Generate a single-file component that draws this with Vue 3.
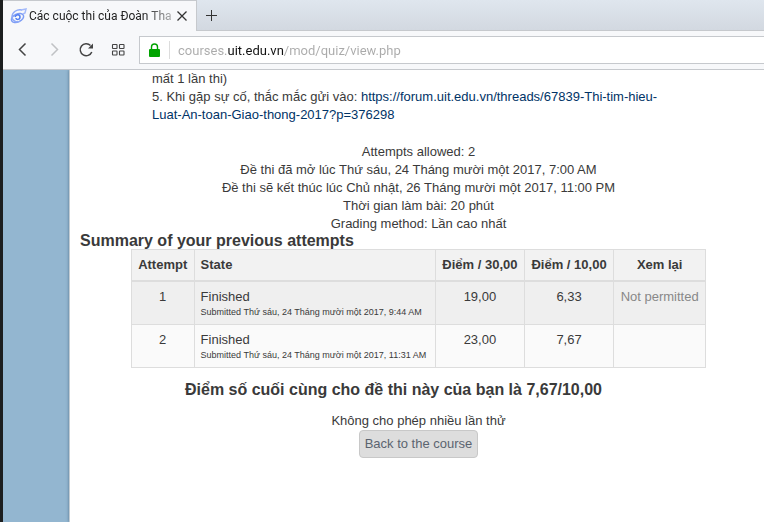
<template>
    <div class="window">
        <header class="browser">
            <div class="tab-bar">
                <div class="tab">
                    <svg class="favicon" width="17" height="16" viewBox="0 0 17 16" fill="none">
                        <ellipse cx="7.5" cy="10" rx="6.500" ry="4" stroke="#7c9cf5" stroke-width="1.5" transform="rotate(-25 7.5 10)" />
                        <path d="M12 2C7 1 2 4 2 9c0 4 5 6 8 4" stroke="#8fabf8" stroke-width="1.5" />
                        <path d="M5 9c1-3 5-3 5 0s-4 3-4 1" stroke="#4f7df2" stroke-width="1.5" />
                        <path d="M11 2l5-1-1 4-2 1" stroke="#a5bbfa" stroke-width="1.5" />
                    </svg>
                    <span class="tab-title">Các cuộc thi của Đoàn Tha</span>
                    <button class="icon-button close" aria-label="Close tab">
                        <svg width="10" height="10" viewBox="0 0 10 10" stroke="#333" stroke-width="1.3">
                            <path d="M.5.5l9 9M9.500.5l-9 9" />
                        </svg>
                    </button>
                </div>
                <button class="icon-button new-tab" aria-label="New tab">
                    <svg width="11" height="11" viewBox="0 0 11 11" stroke="#333" stroke-width="1">
                        <path d="M5.500 0v11M0 5.500h11" />
                    </svg>
                </button>
            </div>
            <div class="toolbar">
                <nav class="nav-buttons">
                    <button class="icon-button" aria-label="Back">
                        <svg width="16" height="16" viewBox="0 0 16 16" fill="none" stroke="#444" stroke-width="1.5">
                            <path d="M11.500 1.500L5.500 7.500l6 6" />
                        </svg>
                    </button>
                    <button class="icon-button" aria-label="Forward" disabled>
                        <svg width="16" height="16" viewBox="0 0 16 16" fill="none" stroke="#c0c2c5" stroke-width="1.5">
                            <path d="M5.500 1.500l6 6-6 6" />
                        </svg>
                    </button>
                    <button class="icon-button" aria-label="Reload">
                        <svg width="16" height="16" viewBox="0 0 16 16" fill="none" stroke="#444" stroke-width="1.5">
                            <path d="M13.800 10A6 6 0 1 1 12.500 3.500" />
                            <path d="M15 1.500v5h-5z" fill="#444" stroke="none" />
                        </svg>
                    </button>
                    <button class="icon-button" aria-label="Speed dial">
                        <svg width="16" height="16" viewBox="0 0 16 16" fill="none" stroke="#444" stroke-width="1.1">
                            <rect x="2.500" y="2.500" width="4.500" height="4" rx=".5" />
                            <rect x="9.500" y="2.500" width="4.500" height="4" rx=".5" />
                            <rect x="2.500" y="9" width="4.500" height="4" rx=".5" />
                            <rect x="9.500" y="9" width="4.500" height="4" rx=".5" />
                        </svg>
                    </button>
                </nav>
                <div class="address">
                    <svg class="lock" width="11" height="14" viewBox="0 0 11 14">
                        <path d="M2.500 7V4a3 3 0 0 1 6 0v3" fill="none" stroke="#00a300" stroke-width="1.400" />
                        <rect y="6" width="11" height="8" rx="1" fill="#00a300" />
                    </svg>
                    <input v-model="url" class="url" type="text" aria-label="Address" spellcheck="false">
                </div>
            </div>
        </header>

        <div class="backdrop">
            <main class="page">
                <div class="intro">
                    mất 1 lần thi)<br>
                    5. Khi gặp sự cố, thắc mắc gửi vào:
                    <a href="https://forum.uit.edu.vn/threads/67839-Thi-tim-hieu-Luat-An-toan-Giao-thong-2017?p=376298">https://forum.uit.edu.vn/threads/67839-Thi-tim-hieu-<wbr>Luat-An-toan-Giao-thong-2017?p=376298</a>
                </div>

                <div class="info">
                    <p v-for="line in info" :key="line">{{ line }}</p>
                </div>

                <h3>Summary of your previous attempts</h3>
                <table>
                    <thead>
                        <tr>
                            <th>Attempt</th>
                            <th class="left">State</th>
                            <th>Điểm / 30,00</th>
                            <th>Điểm / 10,00</th>
                            <th>Xem lại</th>
                        </tr>
                    </thead>
                    <tbody>
                        <tr v-for="a in attempts" :key="a.number">
                            <td>{{ a.number }}</td>
                            <td class="left">
                                Finished
                                <span class="submitted">Submitted {{ a.submitted }}</span>
                            </td>
                            <td>{{ a.marks }}</td>
                            <td>{{ a.grade }}</td>
                            <td class="review">{{ a.review }}</td>
                        </tr>
                    </tbody>
                </table>

                <h3 class="final">Điểm số cuối cùng cho đề thi này của bạn là 7,67/10,00</h3>
                <p class="notice">Không cho phép nhiều lần thử</p>
                <button class="back">Back to the course</button>
            </main>
        </div>
    </div>
</template>

<script setup>
import { ref } from 'vue'

const url = ref('courses.uit.edu.vn/mod/quiz/view.php')

const info = [
    'Attempts allowed: 2',
    'Đề thi đã mở lúc Thứ sáu, 24 Tháng mười một 2017, 7:00 AM',
    'Đề thi sẽ kết thúc lúc Chủ nhật, 26 Tháng mười một 2017, 11:00 PM',
    'Thời gian làm bài: 20 phút',
    'Grading method: Lần cao nhất',
]

const attempts = [
    { number: 1, submitted: 'Thứ sáu, 24 Tháng mười một 2017, 9:44 AM', marks: '19,00', grade: '6,33', review: 'Not permitted' },
    { number: 2, submitted: 'Thứ sáu, 24 Tháng mười một 2017, 11:31 AM', marks: '23,00', grade: '7,67', review: '' },
]
</script>

<style>
body {
    margin: 0;
}
</style>

<style scoped>
.window {
    display: flex;
    flex-direction: column;
    min-height: 100vh;
    box-sizing: border-box;
    border-left: 3px solid #1c1e1f;
    font-family: "Liberation Sans", Arial, sans-serif;
    font-size: 13px;
    line-height: 18px;
    color: #3a3a3a;
}

.browser {
    background: #f7f8fa;
    border-bottom: 1px solid #c6c9cd;
    font-family: Roboto, "Segoe UI", sans-serif;
}

.tab-bar {
    display: flex;
    height: 31px;
    box-sizing: border-box;
    background: linear-gradient(#dfe6ee, #d2d8e0);
}

.tab {
    display: flex;
    align-items: center;
    width: 194px;
    box-sizing: border-box;
    padding: 0 9px 0 7px;
    border-top: 1px solid #c6c9cd;
    border-right: 1px solid #c6c9cd;
    background: #f7f8fa;
}

.favicon {
    flex: none;
    margin-right: 2px;
}

.tab-title {
    flex: 1;
    overflow: hidden;
    white-space: nowrap;
    font-size: 12px;
    color: #222;
    mask-image: linear-gradient(to right, #000 80%, rgba(0, 0, 0, 0.3));
}

.icon-button {
    display: flex;
    align-items: center;
    justify-content: center;
    padding: 0;
    border: 0;
    background: none;
}

.close {
    width: 10px;
    margin-left: 4px;
}

.new-tab {
    flex: 1;
    justify-content: flex-start;
    padding-left: 9px;
    border-bottom: 1px solid #c6c9cd;
}

.toolbar {
    display: flex;
    align-items: center;
    padding: 5px 0;
}

.nav-buttons {
    display: flex;
    gap: 16px;
    padding: 0 13px 0 11px;
}

.address {
    display: flex;
    align-items: center;
    flex: 1;
    height: 28px;
    box-sizing: border-box;
    padding-left: 9px;
    border: 1px solid #c6c9cd;
    border-right: 0;
    background: #fff;
}

.lock {
    flex: none;
    margin-right: 9px;
}

.url {
    flex: 1;
    min-width: 0;
    height: 18px;
    padding: 0 0 0 8px;
    border: 0;
    border-left: 1px solid #dcdcdc;
    outline: 0;
    font: 13px Roboto, "Segoe UI", sans-serif;
    /* host name is darker than the rest of the address */
    background: linear-gradient(to right, #aaa 57px, #111 57px, #111 114px, #aaa 114px);
    background-clip: text;
    color: transparent;
}

.backdrop {
    display: flex;
    flex: 1;
    padding-left: 66px;
    background: #93b6d0;
}

.page {
    flex: 1;
    padding: 0 7px 24px 10px;
    border-left: 1px solid #c3ccd3;
    background: #fff;
    box-shadow: 0 0 3px #52748f;
    clip-path: inset(0 0 0 -6px);
    text-align: center;
}

.intro {
    padding: 0 72px 19px;
    text-align: left;
}

.intro a {
    color: #036;
    text-decoration: none;
}

.info p,
.notice {
    margin: 0;
}

h3 {
    margin: 0;
    font-size: 16px;
    line-height: 16px;
    text-align: left;
}

table {
    width: 85%;
    margin: 0 auto;
    border-collapse: collapse;
    background: #fafafa;
}

th,
td {
    padding: 6px;
    border: 1px solid #ddd;
    vertical-align: top;
}

th {
    background: #f2f2f2;
    border-bottom-width: 2px;
}

tbody tr:nth-child(odd) {
    background: #efefef;
}

.left {
    text-align: left;
}

.submitted {
    display: block;
    font-size: 9px;
    line-height: 12px;
}

.review {
    color: #888;
}

.final {
    margin: 12px 50px 12px 0;
    line-height: 20px;
    text-align: center;
}

.back {
    padding: 4px 5px;
    border: 1px solid #c8c8c8;
    border-radius: 4px;
    background: #ddd;
    color: #5b6470;
    font: inherit;
}
</style>
